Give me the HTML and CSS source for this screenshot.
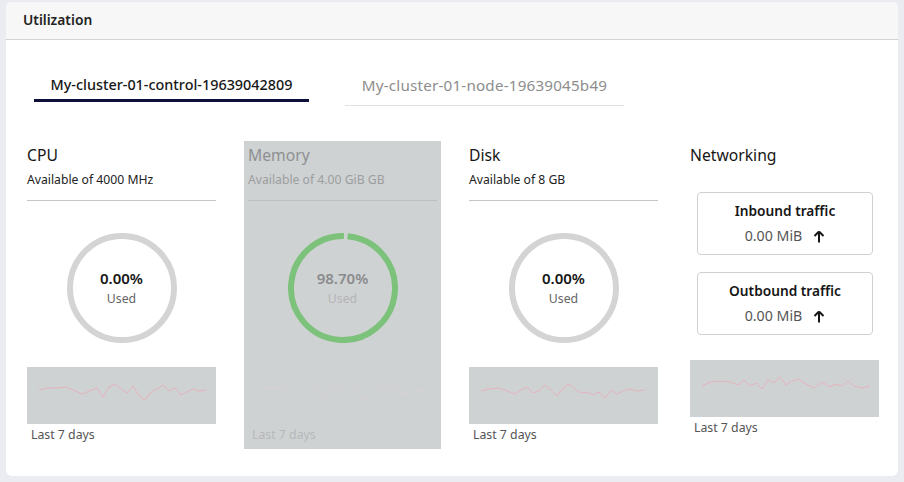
FILE: index.html
```html
<!DOCTYPE html>
<html>
<head>
<meta charset="utf-8">
<link rel="stylesheet" href="styles.css">
</head>
<body>
<div class="card">
  <div class="card-header">Utilization</div>
  <div class="card-body">
    <div class="tabs">
      <div class="tab active">My-cluster-01-control-19639042809</div>
      <div class="tab">My-cluster-01-node-19639045b49</div>
    </div>
    <div class="grid">
      <div class="col">
        <div class="title">CPU</div>
        <div class="sub">Available of 4000 MHz</div>
        <div class="divider"></div>
        <div class="gauge">
          <svg width="110" height="110" viewBox="0 0 110 110"><circle cx="55" cy="55" r="52" fill="none" stroke="#d4d4d4" stroke-width="6"/></svg>
          <div class="gauge-text"><div class="pct">0.00%</div><div class="used">Used</div></div>
        </div>
        <div class="spark">
          <svg width="189" height="57" viewBox="0 0 189 57"><polyline fill="none" stroke="#e6b3bd" stroke-width="1" points="12,23 20,21 30,21 40,20 48,24 56,27 62,24 70,21 76,30 82,20 88,17 94,22 100,26 106,19 112,29 118,33 124,25 130,22 136,18 142,24 148,21 154,28 160,25 166,22 172,24 180,23"/></svg>
        </div>
        <div class="last">Last 7 days</div>
      </div>
      <div class="col dim">
        <div class="title">Memory</div>
        <div class="sub">Available of 4.00 GiB GB</div>
        <div class="divider"></div>
        <div class="gauge">
          <svg width="110" height="110" viewBox="0 0 110 110"><circle cx="55" cy="55" r="52" fill="none" stroke="#7cc27a" stroke-width="6" stroke-dasharray="322.5 4.2" transform="rotate(-85 55 55)"/></svg>
          <div class="gauge-text"><div class="pct">98.70%</div><div class="used">Used</div></div>
        </div>
        <div class="spark">
          <svg width="189" height="57" viewBox="0 0 189 57"><polyline fill="none" stroke="#d8d2d4" stroke-width="1" points="12,23 20,21 30,21 40,20 48,24 56,27 62,24 70,21 76,30 82,20 88,17 94,22 100,26 106,19 112,29 118,33 124,25 130,22 136,18 142,24 148,21 154,28 160,25 166,22 172,24 180,23"/></svg>
        </div>
        <div class="last">Last 7 days</div>
      </div>
      <div class="col">
        <div class="title">Disk</div>
        <div class="sub">Available of 8 GB</div>
        <div class="divider"></div>
        <div class="gauge">
          <svg width="110" height="110" viewBox="0 0 110 110"><circle cx="55" cy="55" r="52" fill="none" stroke="#d4d4d4" stroke-width="6"/></svg>
          <div class="gauge-text"><div class="pct">0.00%</div><div class="used">Used</div></div>
        </div>
        <div class="spark">
          <svg width="189" height="57" viewBox="0 0 189 57"><polyline fill="none" stroke="#e6b3bd" stroke-width="1" points="12,24 20,22 30,21 38,24 46,27 52,23 58,20 64,26 70,24 76,18 82,23 88,29 94,21 100,17 106,22 112,26 118,25 124,28 130,25 136,31 142,23 148,27 154,24 160,22 168,24 176,23"/></svg>
        </div>
        <div class="last">Last 7 days</div>
      </div>
      <div class="col net">
        <div class="title">Networking</div>
        <div class="traffic first">
          <div class="t-title">Inbound traffic</div>
          <div class="t-val">0.00 MiB <svg class="arrow" width="12" height="13" viewBox="0 0 12 13"><path d="M6 1.5 L1.5 6 M6 1.5 L10.5 6 M6 1.5 V12.5" fill="none" stroke="#161616" stroke-width="2"/></svg></div>
        </div>
        <div class="traffic">
          <div class="t-title">Outbound traffic</div>
          <div class="t-val">0.00 MiB <svg class="arrow" width="12" height="13" viewBox="0 0 12 13"><path d="M6 1.5 L1.5 6 M6 1.5 L10.5 6 M6 1.5 V12.5" fill="none" stroke="#161616" stroke-width="2"/></svg></div>
        </div>
        <div class="spark">
          <svg width="189" height="57" viewBox="0 0 189 57"><polyline fill="none" stroke="#e6b3bd" stroke-width="1" points="12,26 20,22 30,21 40,22 48,25 54,20 60,26 66,23 72,29 78,20 84,23 90,17 96,25 102,21 108,19 116,24 124,28 132,22 140,27 146,24 152,26 158,21 164,26 172,28 180,26"/></svg>
        </div>
        <div class="last">Last 7 days</div>
      </div>
    </div>
  </div>
</div>
</body>
</html>
```

FILE: styles.css
```css
* { box-sizing: border-box; }
html, body { margin: 0; padding: 0; }
body {
  background: #ebebf2;
  font-family: "Noto Sans", "Open Sans", sans-serif;
  color: #161616;
  width: 904px;
  height: 482px;
  overflow: hidden;
  padding: 2px 6px 0 6px;
}
.card {
  background: #fff;
  border-radius: 6px;
  height: 474px;
  overflow: hidden;
}
.card-header {
  background: #f7f7f7;
  height: 38px;
  border-bottom: 1px solid #d3d3d3;
  padding-left: 17px;
  font-size: 13.8px;
  font-weight: 600;
  line-height: 36px;
  color: #222;
}
.card-body {
  padding: 35px 0 0 17px;
}
.tabs {
  display: flex;
  align-items: flex-start;
  gap: 36px;
  margin-left: 11px;
}
.tab {
  width: 279px;
  text-align: center;
  font-size: 15.2px;
  letter-spacing: 0.2px;
  line-height: 20px;
  color: #8d8d8d;
  padding-bottom: 10px;
  border-bottom: 1px solid #e0e0e0;
  white-space: nowrap;
}
.tab.active {
  width: 275px;
  font-size: 14.4px;
  letter-spacing: 0;
  color: #161616;
  font-weight: 500;
  padding-bottom: 4px;
  border-bottom: 3px solid #0e0e3a;
}
.grid {
  display: grid;
  grid-template-columns: repeat(4, 197px);
  column-gap: 24px;
  margin-top: 35px;
}
.col {
  padding: 4px 4px 6px 4px;
  display: flex;
  flex-direction: column;
}
.title {
  font-size: 15.7px;
  line-height: 20px;
  color: #161616;
}
.sub {
  font-size: 12.2px;
  line-height: 16px;
  margin-top: 7px;
  color: #222;
  white-space: nowrap;
}
.divider {
  height: 1px;
  background: #c6c6c6;
  margin-top: 12px;
}
.gauge {
  position: relative;
  width: 110px;
  height: 110px;
  margin: 32px auto 0 auto;
}
.gauge svg { display: block; }
.gauge-text {
  position: absolute;
  left: 0; top: 0; right: 0; bottom: 0;
  display: flex;
  flex-direction: column;
  align-items: center;
  justify-content: center;
}
.pct {
  font-size: 15px;
  font-weight: 600;
  line-height: 18px;
  color: #161616;
}
.used {
  font-size: 12.3px;
  line-height: 16px;
  margin-top: 4px;
  color: #666;
}
.spark {
  height: 57px;
  background: #cfd2d3;
  margin-top: 24px;
}
.spark svg { display: block; }
.last {
  font-size: 12.3px;
  line-height: 16px;
  margin-top: 3px;
  padding-left: 4px;
  color: #555;
}
.dim { background: #cfd2d3; }
.dim .title { color: #8e9091; }
.dim .sub { color: #9c9e9f; }
.dim .divider { background: #bcbfc0; }
.dim .pct { color: #8a8b8c; }
.dim .used { color: #b3b5b6; }
.dim .last { color: #b6b9ba; }
.traffic {
  border: 1px solid #d0d0d0;
  border-radius: 4px;
  margin: 17px 6px 0 7px;
  height: 63px;
  padding-top: 9px;
  text-align: center;
}
.traffic.first { margin-top: 27px; }
.t-title {
  font-size: 13.7px;
  font-weight: 600;
  line-height: 18px;
  color: #161616;
}
.t-val {
  font-size: 14.2px;
  line-height: 18px;
  margin-top: 7px;
  color: #555;
  display: flex;
  justify-content: center;
  align-items: center;
  gap: 11px;
}
.net .spark { margin-top: 25px; }
```
